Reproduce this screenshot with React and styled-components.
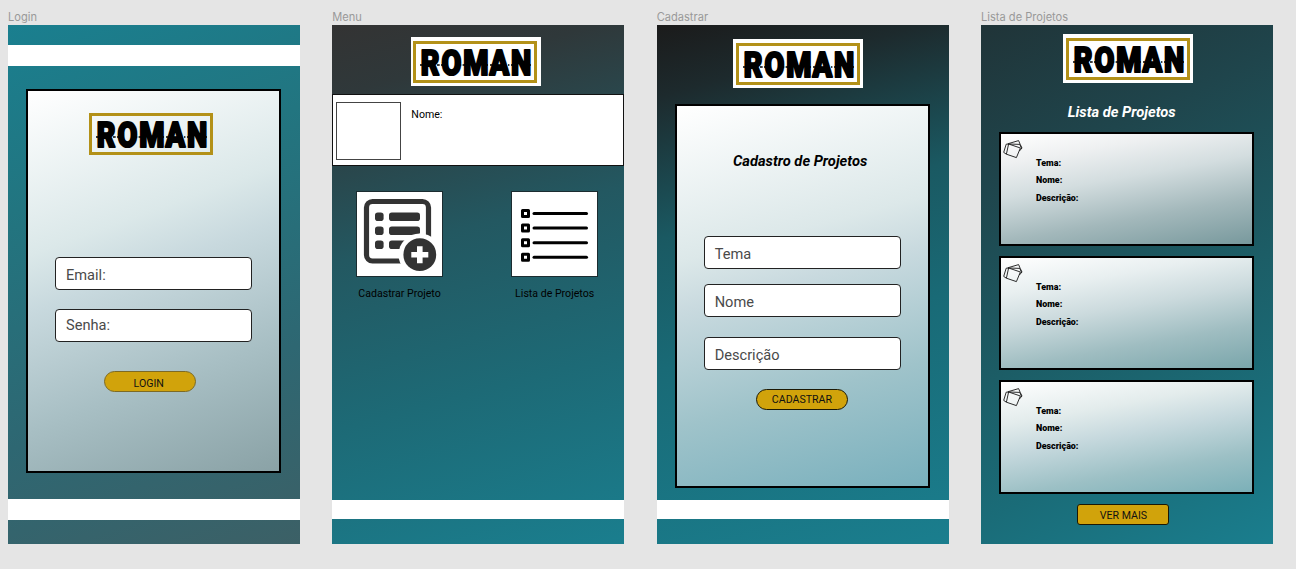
import React from 'react';
import styled, { createGlobalStyle } from 'styled-components';

const GlobalStyle = createGlobalStyle`
  * { box-sizing: border-box; }
  body {
    margin: 0;
    background: #e5e5e5;
    font-family: Roboto, "Liberation Sans", sans-serif;
    color: #000;
  }
`;

const Board = styled.main`
  display: grid;
  grid-template-columns: repeat(4, 292px);
  column-gap: 32.33px;
  padding: 10px 0 0 8px;
  height: 569px;
  overflow: hidden;
`;

const Artboard = styled.section`
  display: flex;
  flex-direction: column;
`;

const FrameName = styled.div`
  height: 15px;
  line-height: 14px;
  font-family: Inter, "Liberation Sans", sans-serif;
  font-size: 11.1px;
  color: #999;
  white-space: nowrap;
`;

const Screen = styled.div`
  display: flex;
  flex-direction: column;
  align-items: center;
  height: 519px;
  background: ${(p) => p.$fill};
`;

const Strip = styled.div`
  flex: none;
  align-self: stretch;
  height: ${(p) => p.$height}px;
  margin-top: ${(p) => p.$top}px;
  background: #fff;
`;

const Panel = styled.div`
  flex: none;
  display: flex;
  flex-direction: column;
  align-items: center;
  width: 255px;
  height: 384px;
  margin-top: ${(p) => p.$top}px;
  margin-right: ${(p) => p.$nudge || 0}px;
  border: 2px solid #000;
  background: ${(p) => p.$fill};
`;

const LogoPlate = styled.div`
  flex: none;
  width: ${(p) => (p.$bare ? 124 : 130)}px;
  height: ${(p) => (p.$bare ? 42 : 49)}px;
  margin-top: ${(p) => p.$top}px;
  margin-right: ${(p) => p.$nudge || 0}px;
  padding: ${(p) => (p.$bare ? '0' : `4px 0 0 ${p.$inset || 3}px`)};
  background: ${(p) => (p.$bare ? 'transparent' : '#fff')};
  svg { display: block; }
`;

const Field = styled.div`
  flex: none;
  width: 197px;
  height: 33px;
  margin-top: ${(p) => p.$top}px;
  margin-right: ${(p) => p.$nudge || 0}px;
  padding-left: 10px;
  border: 1px solid #222;
  border-radius: 4px;
  background: #fff;
  color: #4a4a4a;
  font-size: 14.6px;
  line-height: ${(p) => p.$line || 34}px;
`;

const Action = styled.div`
  flex: none;
  width: 92px;
  height: 21px;
  margin-top: ${(p) => p.$top}px;
  margin-right: ${(p) => p.$nudge || 0}px;
  padding-right: ${(p) => p.$offset || 0}px;
  border: 1px solid ${(p) => p.$edge || '#1c1804'};
  border-radius: ${(p) => p.$radius}px;
  background: #d1a30b;
  color: #111;
  font-size: 10.6px;
  line-height: ${(p) => p.$line || 20}px;
  text-align: center;
`;

const Heading = styled.h1`
  flex: none;
  margin: ${(p) => p.$top}px ${(p) => p.$nudge || 0}px 0 0;
  height: 18px;
  line-height: 18px;
  font-size: 14.7px;
  font-weight: 700;
  font-style: italic;
  color: ${(p) => p.$color || '#000'};
`;

const Profile = styled.div`
  flex: none;
  display: flex;
  align-self: stretch;
  gap: 10px;
  height: 72px;
  margin-top: 8px;
  padding: 7px 0 0 3px;
  border: 1px solid #111;
  background: #fff;
`;

const Photo = styled.div`
  width: 65px;
  height: 58px;
  border: 1px solid #444;
`;

const ProfileName = styled.span`
  padding-top: 5px;
  font-size: 10.6px;
  line-height: 16px;
`;

const Tiles = styled.div`
  align-self: stretch;
  display: flex;
  justify-content: space-between;
  padding: 25px 16.2px 0 13.7px;
`;

const Shortcut = styled.div`
  display: flex;
  flex-direction: column;
  align-items: center;
  width: 107px;
  font-size: 10.6px;
  line-height: 14px;
  white-space: nowrap;
`;

const Tile = styled.div`
  width: 87px;
  height: 86px;
  margin-bottom: 10px;
  border: 1px solid #1b2c30;
  background: #fff;
  svg { display: block; }
`;

const ProjectCard = styled.article`
  flex: none;
  display: flex;
  width: 255px;
  height: 114px;
  margin: ${(p) => p.$top}px 1px 0 0;
  padding: 5px 0 0 2px;
  border: 2px solid #000;
  background: ${(p) => p.$fill};
`;

const Details = styled.div`
  display: flex;
  flex-direction: column;
  padding: 18px 0 0 11px;
  font-size: 8.9px;
  font-weight: 900;
  line-height: 12px;
`;

const Detail = styled.span`
  margin-top: ${(p) => p.$top || 0}px;
`;

function Logo(props) {
  return (
    <LogoPlate {...props}>
      <svg width="124" height="42" viewBox="0 0 124 42">
        <rect x="1.5" y="1.5" width="121" height="39" fill="none" stroke="#b39118" strokeWidth="3" />
        <path
          d="M7 24H10M24 24H26.7M28 24H30M46 24H48.2M49.6 24H52M73 24H75M77 24H79M95 24H96.4M98 24H100M116 24H118"
          stroke="#000"
          strokeWidth="1.4"
        />
        <text
          transform="translate(0 34.2) scale(.8 1)"
          x="9.7 35.7 62.9 95.7 122.6"
          y="0"
          fontFamily="Roboto, 'Liberation Sans', sans-serif"
          fontWeight="900"
          fontSize="36"
          stroke="#000"
          strokeWidth="2.2"
          strokeLinejoin="round"
        >
          ROMAN
        </text>
      </svg>
    </LogoPlate>
  );
}

function AddProjectIcon() {
  return (
    <svg width="85" height="84" viewBox="0 0 85 84">
      <rect x="9.5" y="9.5" width="62" height="59.5" rx="6" fill="none" stroke="#333" strokeWidth="5.2" />
      <g fill="#333">
        {[20.5, 34.5, 48.5].map((y) => (
          <React.Fragment key={y}>
            <rect x="18" y={y} width="8.6" height="8.6" rx="2.8" />
            <rect x="32" y={y} width="31" height="8.6" rx="2.8" />
          </React.Fragment>
        ))}
      </g>
      <circle cx="62.8" cy="62.7" r="21.3" fill="#fff" />
      <circle cx="62.8" cy="62.7" r="16.4" fill="#333" />
      <path d="M62.8 54.2V71.2M54.3 62.7H71.3" stroke="#fff" strokeWidth="5.6" />
    </svg>
  );
}

function ListIcon() {
  return (
    <svg width="85" height="84" viewBox="0 0 85 84" fill="none" stroke="#000" strokeWidth="3">
      {[21.5, 36.1, 50.7, 65.3].map((y) => (
        <React.Fragment key={y}>
          <rect x="10.5" y={y - 3} width="6" height="6" strokeLinejoin="round" />
          <path d={`M22 ${y}H74.5`} strokeLinecap="round" />
        </React.Fragment>
      ))}
    </svg>
  );
}

function CardsIcon() {
  return (
    <svg width="22" height="22" viewBox="0 0 22 22" fill="none" stroke="#151515" strokeWidth=".9" strokeLinejoin="round">
      <path d="M5.6 5L17.4 9L13.4 18.6L3.4 15.2Z" />
      <path d="M5.6 5L3.2 5.2L.7 13.4L3.4 15.2" />
      <path d="M4.8 4.8L15.6 1.6L17.2 5.4L19 9L16.4 12" />
      <path d="M6.4 5L16.8 5.4L18.6 9.6" />
    </svg>
  );
}

const cardFills = [
  'linear-gradient(170deg, #fff 0%, #eef0f1 20%, #d3dddf 42%, #a3b8bb 70%, #78999d 100%)',
  'linear-gradient(170deg, #fff 0%, #e8eff0 24%, #cbdadd 46%, #9fbdc1 72%, #7aa6ab 100%)',
  'linear-gradient(170deg, #fff 0%, #e3ecec 28%, #c5d8dd 48%, #9cc0c5 74%, #7bb0b8 100%)',
];

export default function App() {
  return (
    <>
      <GlobalStyle />
      <Board>
        <Artboard>
          <FrameName>Login</FrameName>
          <Screen $fill="linear-gradient(160deg, #1a7f8f 0%, #227580 30%, #2e6772 68%, #3c6066 100%)">
            <Strip $top={20} $height={21} />
            <Panel $top={23} $nudge={1} $fill="linear-gradient(160deg, #fff 0%, #dbe8e9 35%, #c8d9de 47%, #a8bfc4 72%, #8aa2a6 100%)">
              <Logo $bare $top={22} $nudge={5} />
              <Field $top={102}>Email:</Field>
              <Field $top={19} $line={30}>Senha:</Field>
              <Action $top={29} $nudge={7.5} $offset={2} $radius={11} $line={23} $edge="#7d6a24">LOGIN</Action>
            </Panel>
            <Strip $top={26} $height={21} />
          </Screen>
        </Artboard>

        <Artboard>
          <FrameName>Menu</FrameName>
          <Screen $fill="linear-gradient(165deg, #333 0%, #2f383a 12%, #235861 40%, #1d6a76 68%, #1a7e8e 100%)">
            <Logo $top={12} $inset={2} $nudge={4} />
            <Profile>
              <Photo />
              <ProfileName>Nome:</ProfileName>
            </Profile>
            <Tiles>
              <Shortcut>
                <Tile><AddProjectIcon /></Tile>
                Cadastrar Projeto
              </Shortcut>
              <Shortcut>
                <Tile><ListIcon /></Tile>
                Lista de Projetos
              </Shortcut>
            </Tiles>
            <Strip $top={199} $height={19} />
          </Screen>
        </Artboard>

        <Artboard>
          <FrameName>Cadastrar</FrameName>
          <Screen $fill="linear-gradient(165deg, #1b1b1b 0%, #1d2a2d 12%, #1a5962 36%, #196a76 58%, #1a7e8e 100%)">
            <Logo $top={14} $nudge={10} />
            <Panel $top={16} $fill="linear-gradient(165deg, #fff 0%, #dce8e9 35%, #c9dadf 46%, #9fc3ca 72%, #79b0bd 100%)">
              <Heading $top={46} $nudge={5}>Cadastro de Projetos</Heading>
              <Field $top={66} $nudge={1}>Tema</Field>
              <Field $top={15} $nudge={1}>Nome</Field>
              <Field $top={20} $nudge={1}>Descrição</Field>
              <Action $top={19} $nudge={1.5} $radius={11}>CADASTRAR</Action>
            </Panel>
            <Strip $top={12} $height={19} />
          </Screen>
        </Artboard>

        <Artboard>
          <FrameName>Lista de Projetos</FrameName>
          <Screen $fill="linear-gradient(155deg, #203438 0%, #1f454c 25%, #1c5d66 55%, #1a6c78 76%, #1a7e8e 100%)">
            <Logo $top={9} $nudge={-2} />
            <Heading $top={20} $nudge={10.5} $color="#fff">Lista de Projetos</Heading>
            {cardFills.map((fill, index) => (
              <ProjectCard key={fill} $fill={fill} $top={index === 0 ? 11 : 10}>
                <CardsIcon />
                <Details>
                  <Detail>Tema:</Detail>
                  <Detail $top={5}>Nome:</Detail>
                  <Detail $top={6}>Descrição:</Detail>
                </Details>
              </ProjectCard>
            ))}
            <Action $top={10} $nudge={7} $radius={3} $line={21}>VER MAIS</Action>
          </Screen>
        </Artboard>
      </Board>
    </>
  );
}
